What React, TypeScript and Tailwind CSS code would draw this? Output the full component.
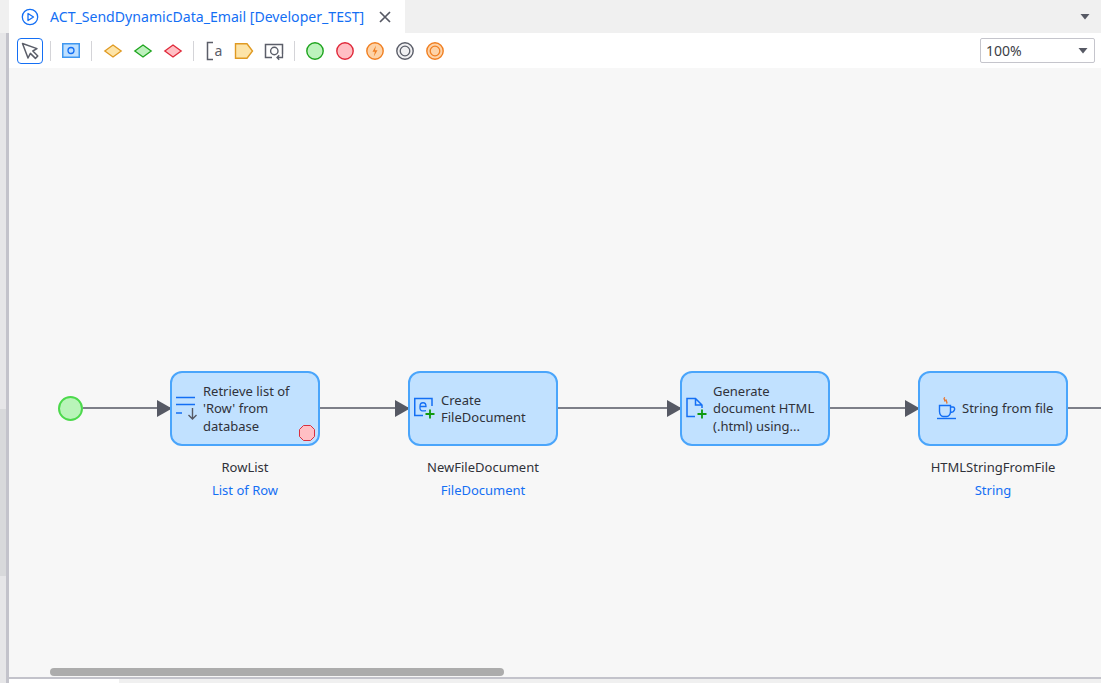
import type { ReactNode } from "react";

const font = "font-['Noto_Sans','Open_Sans',sans-serif]";

function Sep({ className }: { className: string }) {
  return <div className={`h-[20px] w-[1px] bg-[#d4d4d8] ${className}`} />;
}

function ToolIcon({ children }: { children: ReactNode }) {
  return (
    <svg width="20" height="20" viewBox="0 0 20 20" className="mx-[5px] shrink-0" fill="none">
      {children}
    </svg>
  );
}

function Diamond({ fill, stroke }: { fill: string; stroke: string }) {
  return (
    <ToolIcon>
      <path d="M10 4 18.200 10 10 16 1.800 10Z" fill={fill} stroke={stroke} strokeWidth="1.300" />
    </ToolIcon>
  );
}

function Circle({ fill, stroke, inner, bolt }: { fill: string; stroke: string; inner?: boolean; bolt?: boolean }) {
  return (
    <ToolIcon>
      <circle cx="10" cy="10" r="8.200" fill={fill} stroke={stroke} strokeWidth="1.400" />
      {inner && <circle cx="10" cy="10" r="4.800" fill="none" stroke={stroke} strokeWidth="1.300" />}
      {bolt && <path d="M11 4.500 7.500 10.800h2.400L8.800 15.500 12.500 9.200H10Z" fill={stroke} />}
    </ToolIcon>
  );
}

function Toolbar() {
  return (
    <div className="flex h-[35px] items-center bg-white pl-[8px] pr-[6px]">
      <div className="flex h-[26px] w-[26px] items-center justify-center rounded-[4px] border border-[#146ff4]">
        <svg width="20" height="20" viewBox="0 0 20 20" fill="none">
          <path d="M2.500 2.500 8 17l2.400-4.600 5 5 2.400-2.400-5-5L17 7.600Z" fill="#fff" stroke="#5b5e69" strokeWidth="1.500" strokeLinejoin="round" />
        </svg>
      </div>
      <Sep className="ml-[7px] mr-[11px]" />
      <svg width="18" height="15" viewBox="0 0 18 15" className="shrink-0" fill="none">
        <rect x="0.750" y="0.750" width="16.500" height="13.500" fill="#bfe0ff" stroke="#3f97f0" strokeWidth="1.500" />
        <circle cx="9" cy="7.500" r="3" fill="none" stroke="#146ff4" strokeWidth="1.300" />
      </svg>
      <Sep className="ml-[11px] mr-[6px]" />
      <Diamond fill="#fde4a8" stroke="#e09a22" />
      <Diamond fill="#bdf0bd" stroke="#1fa51f" />
      <Diamond fill="#ffbfc4" stroke="#e0293a" />
      <Sep className="mx-[5px]" />
      <ToolIcon>
        <path d="M9 1.500H3.500v17H9" stroke="#5b5e69" strokeWidth="1.500" />
        <text x="10.500" y="15" fontSize="14" fill="#5b5e69" fontFamily="Noto Sans, sans-serif">a</text>
      </ToolIcon>
      <ToolIcon>
        <path d="M1.500 2.800h11.500l5.500 7.200-5.500 7.200H1.500Z" fill="#fde4a8" stroke="#e09a22" strokeWidth="1.400" />
      </ToolIcon>
      <ToolIcon>
        <path d="M8 16.500H1.500V3.500h17V13" stroke="#5b5e69" strokeWidth="1.500" />
        <circle cx="10.300" cy="10" r="3.700" stroke="#5b5e69" strokeWidth="1.400" />
        <path d="M18.500 13v3.500H13m2.200-2.200-2.200 2.200 2.200 2.200" stroke="#5b5e69" strokeWidth="1.300" />
      </ToolIcon>
      <Sep className="mx-[5px]" />
      <Circle fill="#bdf3bd" stroke="#1fa51f" />
      <Circle fill="#ffbfc4" stroke="#e0293a" />
      <Circle fill="#fdd3a8" stroke="#f07f22" bolt />
      <Circle fill="#f0f0f2" stroke="#5b5e69" inner />
      <Circle fill="#fdd3a8" stroke="#f07f22" inner />
      <div className="ml-auto flex h-[25px] w-[115px] items-center justify-between rounded-[2px] border border-[#c5c5cc] pl-[5px] pr-[6px] text-[14px] text-[#3c3e46]">
        <span>100%</span>
        <svg width="10" height="6" viewBox="0 0 10 6"><path d="M0.500 0h9L5 5.500Z" fill="#565964" /></svg>
      </div>
    </div>
  );
}

function Node({ left, children, name, typeName }: { left: number; children: ReactNode; name?: string; typeName?: string }) {
  return (
    <div className="absolute top-[303px] w-[150px]" style={{ left }}>
      <div className="relative flex h-[75px] items-center rounded-[12px] border-2 border-[#4aa5fb] bg-[#c1e1ff] text-[13px] leading-[17.500px] text-[#30323a]">
        {children}
      </div>
      {name && <div className="mt-[12px] text-center text-[13px] leading-[18px] text-[#30323a]">{name}</div>}
      {typeName && <div className="mt-[5px] text-center text-[13px] leading-[18px] text-[#146ff4]">{typeName}</div>}
    </div>
  );
}

function Edge({ left, width }: { left: number; width: number }) {
  return <div className="absolute top-[339px] h-[2px] bg-[#7d7f88]" style={{ left, width }} />;
}

function Arrow({ left }: { left: number }) {
  return (
    <svg width="15" height="17" viewBox="0 0 15 17" className="absolute top-[332px]" style={{ left }}>
      <path d="M0 0 15 8.500 0 17Z" fill="#565964" />
    </svg>
  );
}

function Canvas() {
  return (
    <div className="relative flex-1 overflow-hidden bg-[#f7f7f7]">
      <div className="absolute left-[49px] top-[328px] h-[25px] w-[25px] rounded-full border-[2.500px] border-[#4cd94c] bg-[#b9f4b9]" />

      <Edge left={74} width={90} />
      <Arrow left={148} />
      <Edge left={311} width={90} />
      <Arrow left={386} />
      <Edge left={549} width={125} />
      <Arrow left={658} />
      <Edge left={821} width={80} />
      <Arrow left={896} />
      <Edge left={1059} width={40} />

      <Node left={161} name="RowList" typeName="List of Row">
        <svg width="26" height="26" viewBox="0 0 26 26" className="absolute left-[3px] top-[23px]" fill="none">
          <path d="M1 1.500h19M1 8.500h19M1 17h6" stroke="#146ff4" strokeWidth="1.500" />
          <path d="M17.500 12v11m-4-4 4 4 4-4" stroke="#565964" strokeWidth="1.400" />
        </svg>
        <div className="pl-[31px] pt-[1px]">
          Retrieve list of
          <br />
          'Row' from
          <br />
          database
        </div>
        <svg width="16" height="16" viewBox="0 0 16 16" className="absolute bottom-[3px] right-[3px]">
          <path d="M4.500.5h7l4 4v7l-4 4h-7l-4-4v-7Z" fill="#ffbfc4" stroke="#d9303f" strokeWidth="1" />
        </svg>
      </Node>

      <Node left={399} name="NewFileDocument" typeName="FileDocument">
        <svg width="24" height="24" viewBox="0 0 24 24" className="absolute left-[3px] top-[23px]" fill="none">
          <path d="M10 19.500H1.750V2.500H19V10" stroke="#146ff4" strokeWidth="1.500" />
          <path d="M7 10.500h6c0-5-6-5-6 0v2c0 2.500 3 2.800 6 2.200" stroke="#146ff4" strokeWidth="1.300" />
          <path d="M17 13.500v9M12.500 18h9" stroke="#109a10" strokeWidth="1.800" />
        </svg>
        <div className="pl-[31px] pt-[1px]">
          Create
          <br />
          FileDocument
        </div>
      </Node>

      <Node left={671}>
        <svg width="24" height="24" viewBox="0 0 24 24" className="absolute left-[3px] top-[23px]" fill="none">
          <path d="M10 20.500H2V2.500H10.500L17 9V12M10.500 2.500V9H17" stroke="#146ff4" strokeWidth="1.500" />
          <path d="M17 13.500v9M12.500 18h9" stroke="#109a10" strokeWidth="1.800" />
        </svg>
        <div className="pl-[31px] pt-[1px]">
          Generate
          <br />
          document HTML
          <br />
          (.html) using...
        </div>
      </Node>

      <Node left={909} name="HTMLStringFromFile" typeName="String">
        <svg width="22" height="24" viewBox="0 0 22 24" className="absolute left-[17px] top-[24px]" fill="none">
          <path d="M8 .5C5.500 2 9 3 7.500 4.500M9.500 2.500C8 4 11 4.500 9.500 6.500" stroke="#e8732a" strokeWidth="1.300" />
          <path d="M2.500 8.500h11v6c0 3-2 5-3.500 5H6c-1.500 0-3.500-2-3.500-5ZM13.500 10h2.500c2.500 0 2.500 5-2.500 5.500" stroke="#146ff4" strokeWidth="1.400" />
          <path d="M0 21.500h19" stroke="#146ff4" strokeWidth="1.400" />
        </svg>
        <div className="pl-[42px]">String from file</div>
      </Node>

      {/* horizontal scrollbar */}
      <div className="absolute bottom-[1px] left-[41px] h-[8px] w-[454px] rounded-full bg-[#acacac]" />
    </div>
  );
}

export default function App() {
  return (
    <div className={`flex h-[683px] w-[1101px] overflow-hidden bg-white ${font}`}>
      {/* left rail with scrollbar */}
      <div className="flex w-[9px] shrink-0 flex-col">
        <div className="h-[33px] bg-[#f0f0f0]" />
        <div className="flex flex-1">
          <div className="flex w-[6px] flex-col bg-[#e6e6e8]">
            <div className="mt-[376px] h-[167px] bg-[#d8d9db]" />
          </div>
          <div className="w-[3px] bg-[#c3c3cb]" />
        </div>
      </div>

      <div className="flex min-w-0 flex-1 flex-col">
        {/* tab bar */}
        <div className="flex h-[33px] items-center bg-[#f0f0f0]">
          <div className="flex h-full w-[396px] items-center bg-white pl-[12px]">
            <svg width="18" height="18" viewBox="0 0 18 18" fill="none">
              <circle cx="9" cy="9" r="7.700" stroke="#146ff4" strokeWidth="1.300" />
              <path d="M7 5.500v7l5.500-3.500Z" stroke="#146ff4" strokeWidth="1.300" strokeLinejoin="round" />
            </svg>
            <span className="ml-[11px] text-[14.100px] whitespace-nowrap text-[#146ff4]">ACT_SendDynamicData_Email [Developer_TEST]</span>
            <svg width="12" height="12" viewBox="0 0 12 12" className="ml-[15px]" fill="none">
              <path d="M1 1l10 10M11 1 1 11" stroke="#565964" strokeWidth="1.700" />
            </svg>
          </div>
          <svg width="10" height="6" viewBox="0 0 10 6" className="ml-auto mr-[11px]"><path d="M0.500 0h9L5 5.500Z" fill="#565964" /></svg>
        </div>
        <Toolbar />
        <Canvas />
        {/* bottom edge */}
        <div className="h-[2px] bg-[#c3c3cb]" />
        <div className="flex h-[4px]">
          <div className="w-[110px] bg-white" />
          <div className="flex-1 bg-[#f0f0f0]" />
        </div>
      </div>
    </div>
  );
}
